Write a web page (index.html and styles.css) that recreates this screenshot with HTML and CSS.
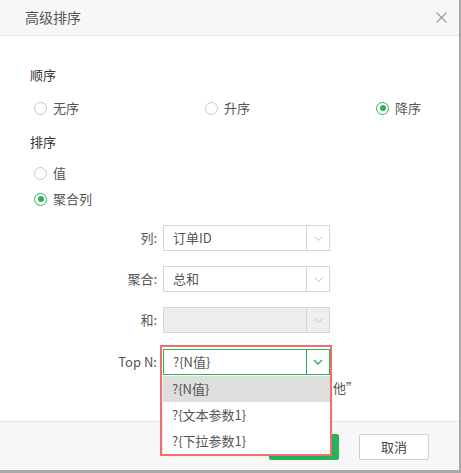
FILE: index.html
```html
<!DOCTYPE html>
<html lang="zh-CN">
<head>
<meta charset="utf-8">
<title>高级排序</title>
<link rel="stylesheet" href="styles.css">
</head>
<body>
<div class="dialog">
  <div class="header">
    <span class="title">高级排序</span>
    <span class="close">
      <svg width="11" height="11" viewBox="0 0 11 11"><path d="M0.5 0.5 L10.5 10.5 M10.5 0.5 L0.5 10.5" stroke="#9a9a9a" stroke-width="1.1" fill="none"/></svg>
    </span>
  </div>
  <div class="content">
    <div class="section-label">顺序</div>
    <div class="radio-row three">
      <label class="radio"><span class="dot"></span><span>无序</span></label>
      <label class="radio"><span class="dot"></span><span>升序</span></label>
      <label class="radio"><span class="dot on"></span><span>降序</span></label>
    </div>
    <div class="section-label second">排序</div>
    <div class="radio-col">
      <label class="radio"><span class="dot"></span><span>值</span></label>
      <label class="radio"><span class="dot on"></span><span>聚合列</span></label>
    </div>
    <div class="form">
      <div class="flabel">列:</div>
      <div class="select"><span class="val">订单ID</span><span class="arrow"><svg width="9" height="5" viewBox="0 0 9 5"><path d="M0.5 0.5 L4.5 4.5 L8.5 0.5" stroke="#c4c4c4" fill="none"/></svg></span></div>
      <div class="flabel">聚合:</div>
      <div class="select"><span class="val">总和</span><span class="arrow"><svg width="9" height="5" viewBox="0 0 9 5"><path d="M0.5 0.5 L4.5 4.5 L8.5 0.5" stroke="#c4c4c4" fill="none"/></svg></span></div>
      <div class="flabel">和:</div>
      <div class="select disabled"><span class="val"></span><span class="arrow"><svg width="9" height="5" viewBox="0 0 9 5"><path d="M0.5 0.5 L4.5 4.5 L8.5 0.5" stroke="#c4c4c4" fill="none"/></svg></span></div>
      <div class="flabel topn">Top N:</div>
      <div class="select-wrap topn">
        <div class="select active"><span class="val">?{N值}</span><span class="arrow"><svg width="10" height="6" viewBox="0 0 10 6"><path d="M1 1 L5 5 L9 1" stroke="#2bb35b" stroke-width="1.4" fill="none"/></svg></span></div>
        <ul class="dropdown">
          <li class="hl">?{N值}</li>
          <li>?{文本参数1}</li>
          <li>?{下拉参数1}</li>
        </ul>
        <div class="mark"></div>
      </div>
      <div class="spacer"></div>
      <div class="hidden-note">他”</div>
    </div>
  </div>
  <div class="footer">
    <button class="btn primary">确定</button>
    <button class="btn">取消</button>
  </div>
</div>
</body>
</html>
```

FILE: styles.css
```css
* { box-sizing: border-box; }
html, body { margin: 0; padding: 0; }
body {
  width: 461px;
  height: 473px;
  background: #a8a8a8;
  font-family: "Noto Sans CJK SC", "Noto Sans", sans-serif;
  font-size: 13px;
  color: #555;
  overflow: hidden;
}
.dialog {
  width: 459px;
  height: 470px;
  background: #fff;
  display: flex;
  flex-direction: column;
}
.header {
  height: 36px;
  flex: none;
  background: #f7f7f7;
  border-bottom: 1px solid #e6e6e6;
  display: flex;
  align-items: center;
  justify-content: space-between;
  padding: 0 12px 1px 25px;
}
.title {
  font-size: 14px;
  line-height: 20px;
  color: #555;
}
.close {
  display: flex;
  width: 11px;
  height: 11px;
}
.content {
  flex: 1;
  padding: 29px 0 0 30px;
}
.section-label {
  line-height: 20px;
  height: 20px;
  color: #333;
}
.section-label.second { margin-top: 14px; }
.radio-row.three {
  display: grid;
  grid-template-columns: 171px 171px auto;
  margin-top: 13px;
  padding-left: 4px;
}
.radio-col {
  display: flex;
  flex-direction: column;
  gap: 6px;
  margin-top: 11px;
  padding-left: 4px;
}
.radio {
  display: flex;
  align-items: center;
  height: 20px;
  line-height: 20px;
  color: #555;
}
.dot {
  width: 13px;
  height: 13px;
  border: 1px solid #c8c8c8;
  border-radius: 50%;
  margin-right: 6px;
  display: flex;
  align-items: center;
  justify-content: center;
  background: #fff;
}
.dot.on { border-color: #2bb35b; }
.dot.on::after {
  content: "";
  width: 6px;
  height: 6px;
  border-radius: 50%;
  background: #2bb35b;
}
.form {
  display: grid;
  grid-template-columns: 127px 167px;
  column-gap: 6px;
  row-gap: 15px;
  margin-top: 16px;
  align-items: center;
}
.flabel {
  text-align: right;
  line-height: 20px;
  color: #555;
}
.flabel.topn { margin-top: 1px; }
.select {
  height: 26px;
  border: 1px solid #d6d6d6;
  display: flex;
  align-items: stretch;
  background: #fff;
}
.select .val {
  flex: 1;
  padding-left: 9px;
  line-height: 24px;
  color: #555;
}
.select .arrow {
  width: 23px;
  border-left: 1px solid #d6d6d6;
  display: flex;
  align-items: center;
  justify-content: center;
}
.select.disabled { background: #eeeeee; }
.select.active { border-color: #2bb35b; }
.select.active .arrow { border-left-color: #2bb35b; }
.select-wrap { position: relative; }
.select-wrap.topn { margin-top: 1px; }
.dropdown {
  position: absolute;
  left: 0;
  top: 27px;
  width: 168px;
  margin: 0;
  padding: 0;
  list-style: none;
  background: #fff;
  box-shadow: 0 1px 3px rgba(0,0,0,0.15);
  z-index: 5;
}
.dropdown li {
  height: 26px;
  line-height: 26px;
  padding-left: 9px;
  color: #555;
}
.dropdown li.hl { background: #dedede; }
.mark {
  position: absolute;
  left: -3px;
  top: -4px;
  width: 172px;
  height: 111px;
  border: 2px solid #f06e6e;
  z-index: 6;
  pointer-events: none;
}
.spacer { height: 0; }
.hidden-note {
  margin-top: -12px;
  margin-left: 170px;
  line-height: 20px;
  white-space: nowrap;
  color: #555;
}
.footer {
  flex: none;
  height: 49px;
  background: #f7f7f7;
  border-top: 1px solid #e8e8e8;
  display: flex;
  justify-content: flex-end;
  align-items: flex-start;
  gap: 20px;
  padding: 12px 30px 0 0;
}
.btn {
  width: 70px;
  height: 26px;
  border: 1px solid #cfcfcf;
  background: #fff;
  border-radius: 2px;
  font-family: "Noto Sans CJK SC", "Noto Sans", sans-serif;
  font-size: 13px;
  color: #444;
  padding: 0;
  line-height: 24px;
}
.btn.primary {
  background: #26b35a;
  border-color: #26b35a;
  color: #fff;
}
```
